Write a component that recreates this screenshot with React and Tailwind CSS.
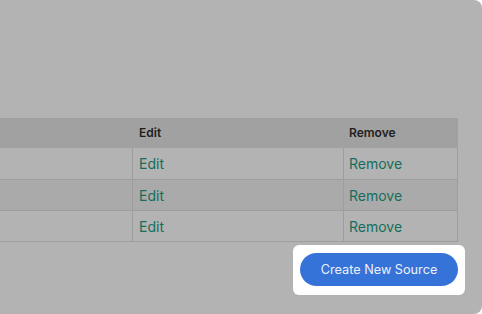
import React from "react";

const rows = [
  { id: 1, bg: "bg-[#b3b3b3]" },
  { id: 2, bg: "bg-[#aaaaaa]" },
  { id: 3, bg: "bg-[#b3b3b3]" },
];

export default function App() {
  return (
    <div className="w-[482px] h-[314px] bg-white" style={{ fontFamily: "Inter, 'Noto Sans', sans-serif" }}>
      <div className="w-full h-full bg-[#b3b3b3] rounded-tr-[8px] rounded-br-[8px] pt-[118px]">
        <div className="w-[458px] border-b border-[#9e9e9e]">
          <div className="flex h-[30px] bg-[#a1a1a1] text-[12px] font-semibold text-[#1e1e1e]">
            <div className="w-[133px]" />
            <div className="w-[211px] pl-[6px] flex items-center">Edit</div>
            <div className="flex-1 pl-[5px] flex items-center">Remove</div>
          </div>
          {rows.map((r, i) => (
            <div key={r.id} className={`flex h-[31px] ${r.bg} text-[14px] text-[#146e5c] ${i > 0 ? "border-t border-[#9e9e9e]" : ""}`}>
              <div className="w-[133px] border-r border-[#9e9e9e]" />
              <div className="w-[211px] pl-[6px] flex items-center border-r border-[#9e9e9e]">Edit</div>
              <div className="flex-1 pl-[5px] flex items-center border-r border-[#9e9e9e]">Remove</div>
            </div>
          ))}
        </div>
        <div className="flex justify-end pr-[17px] mt-[3px]">
          <div className="bg-white rounded-[6px] pt-[8px] pb-[9px] px-[7px]">
            <button className="w-[158px] h-[33px] rounded-full bg-[#3673d9] text-[12.7px] text-[#eef0fb]">
              Create New Source
            </button>
          </div>
        </div>
      </div>
    </div>
  );
}
